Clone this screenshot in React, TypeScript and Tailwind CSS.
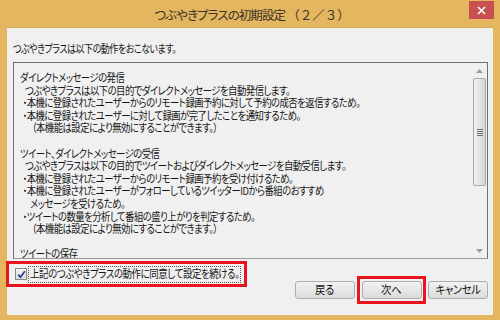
import React from "react";

type Line = { t: string; x: number };

const lines: Line[] = [
  { t: "ダイレクトメッセージの発信", x: 7 },
  { t: "つぶやきプラスは以下の目的でダイレクトメッセージを自動発信します。", x: 13 },
  { t: "・本機に登録されたユーザーからのリモート録画予約に対して予約の成否を返信するため。", x: 10 },
  { t: "・本機に登録されたユーザーに対して録画が完了したことを通知するため。", x: 10 },
  { t: "（本機能は設定により無効にすることができます。）", x: 21 },
  { t: "", x: 0 },
  { t: "ツイート、ダイレクトメッセージの受信", x: 7 },
  { t: "つぶやきプラスは以下の目的でツイートおよびダイレクトメッセージを自動受信します。", x: 13 },
  { t: "・本機に登録されたユーザーからのリモート録画予約を受け付けるため。", x: 10 },
  { t: "・本機に登録されたユーザーがフォローしているツイッターIDから番組のおすすめ", x: 10 },
  { t: "メッセージを受けるため。", x: 19 },
  { t: "・ツイートの数量を分析して番組の盛り上がりを判定するため。", x: 10 },
  { t: "（本機能は設定により無効にすることができます。）", x: 21 },
  { t: "", x: 0 },
  { t: "ツイートの保存", x: 7 },
  { t: "つぶやきプラスは以下の目的でツイートを保存します。", x: 13 },
];

function WinButton({ label }: { label: string }) {
  return (
    <div className="w-[60px] h-[18px] rounded-[3px] border border-[#adadad] bg-gradient-to-b from-[#f2f2f2] to-[#dcdcdc] flex items-center justify-center">
      <span className="inline-block text-[11.5px] leading-none tracking-[-0.4px] text-[#111] scale-x-[0.9]">{label}</span>
    </div>
  );
}

export default function App() {
  return (
    <div className="w-[500px] h-[320px] bg-[#E3B65F] flex flex-col font-['Noto_Sans_CJK_JP',sans-serif] [font-feature-settings:'palt'] text-[#161616] overflow-hidden">
      {/* Title bar */}
      <div className="h-[27px] relative flex items-center justify-center">
        <div className="pt-[3px] pl-[4px] flex items-center text-[#3a3326] text-[12.5px] leading-none">
          <span className="tracking-[-0.9px]">つぶやきプラスの初期設定</span>
          <span className="[font-feature-settings:normal] ml-[2px]">（２／３）</span>
        </div>
        <div className="absolute right-[6px] top-[1px] w-[25px] h-[18px] bg-[#C75050] flex items-center justify-center">
          <svg width="9" height="9" viewBox="0 0 9 9">
            <path d="M1 1 L8 8 M8 1 L1 8" stroke="#ffffff" strokeWidth="1.6" />
          </svg>
        </div>
      </div>

      {/* Client area */}
      <div className="mx-[7px] h-[288px] bg-[#F0F0F0] flex flex-col border-t border-[#d9ad57]">
        <div className="pl-[6px] pt-[14px] h-[27px] text-[11px] leading-[13px] tracking-[-0.6px]">
          <span className="inline-block origin-left scale-x-[0.82] whitespace-nowrap">
            つぶやきプラスは以下の動作をおこないます。
          </span>
        </div>
        <div className="mt-[7px] ml-[6px] w-[475px] h-[197px] border border-[#6f6f6f] border-b-[#9a9a9a] flex bg-[#F0F0F0]">
          <div className="flex-1 overflow-hidden">
            <div className="pt-[8px] text-[11px] leading-[12.6px] tracking-[-0.6px] origin-top-left scale-x-[0.85] w-[540px]">
              {lines.map((l, i) => (
                <div key={i} className="h-[12.6px] whitespace-nowrap" style={{ paddingLeft: l.x }}>
                  {l.t}
                </div>
              ))}
            </div>
          </div>
          <div className="w-[15px] flex flex-col items-center">
            <div className="h-[15px] flex items-center justify-center">
              <svg width="7" height="4" viewBox="0 0 7 4">
                <path d="M0 4 L3.5 0 L7 4 Z" fill="#9a9a9a" />
              </svg>
            </div>
            <div className="w-[13px] h-[108px] rounded-[2px] border border-[#a8a8a8] bg-gradient-to-r from-[#f0f0f0] to-[#d8d8d8] flex items-center justify-center">
              <div className="flex flex-col gap-[1px]">
                <div className="w-[6px] h-[1px] bg-[#6f6f6f]" />
                <div className="w-[6px] h-[1px] bg-[#6f6f6f]" />
                <div className="w-[6px] h-[1px] bg-[#6f6f6f]" />
                <div className="w-[6px] h-[1px] bg-[#6f6f6f]" />
              </div>
            </div>
            <div className="flex-1" />
            <div className="h-[15px] flex items-center justify-center">
              <svg width="7" height="4" viewBox="0 0 7 4">
                <path d="M0 0 L3.5 4 L7 0 Z" fill="#9a9a9a" />
              </svg>
            </div>
          </div>
        </div>

        {/* Bottom */}
        <div className="flex items-start justify-between pr-[5px]">
          <div className="mt-[2px] ml-[-1px] w-[241px] h-[26px] border-[3px] border-[#E8141E] flex items-center pl-[6px]">
            <div className="w-[12px] h-[12px] border border-[#8a8a8a] bg-gradient-to-b from-[#f4f4f4] to-[#dedede] flex items-center justify-center">
              <svg width="9" height="9" viewBox="0 0 9 9">
                <path d="M1.2 4.6 L3.5 7.2 L7.8 1.2" stroke="#1f3a8a" strokeWidth="1.6" fill="none" />
              </svg>
            </div>
            <div className="ml-[1px] w-[213px] h-[17px] pl-[1px] border border-dotted border-[#555] flex items-center text-[11.5px] leading-none tracking-[-0.5px] whitespace-nowrap overflow-visible">
              <span className="inline-block origin-left scale-x-[0.82]">
                上記のつぶやきプラスの動作に同意して設定を続ける。
              </span>
            </div>
          </div>
          <div className="mt-[17px] flex items-start gap-[2px]">
            <div className="mt-[5px]">
              <WinButton label="戻る" />
            </div>
            <div className="w-[69px] h-[28px] border-[3px] border-[#E8141E] flex justify-center pt-[2px]">
              <WinButton label="次へ" />
            </div>
            <div className="mt-[5px]">
              <WinButton label="キャンセル" />
            </div>
          </div>
        </div>
      </div>
    </div>
  );
}
